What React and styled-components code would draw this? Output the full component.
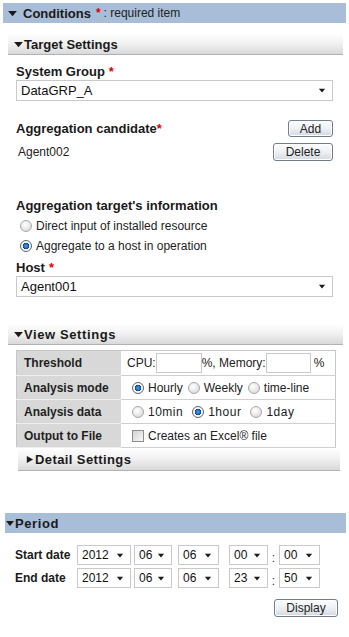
import React from "react";
import styled, { createGlobalStyle } from "styled-components";

const GlobalStyle = createGlobalStyle`
  body {
    margin: 0;
    background: #fff;
    font-family: "Liberation Sans", Arial, sans-serif;
    font-size: 12px;
    color: #222;
  }
`;

const Page = styled.div`
  width: 349px;
  padding-top: 3px;
  padding-bottom: 20px;
`;

const BlueBar = styled.div`
  display: flex;
  align-items: center;
  height: 20px;
  margin: ${(p) => p.$margin || "0 3px"};
  padding-left: ${(p) => p.$pad || 5}px;
  background: #a8bdd7;
  color: #1a1a1a;
`;

const BarTitle = styled.span`
  font-size: 13px;
  font-weight: bold;
  letter-spacing: ${(p) => p.$spacing || 0}px;
  margin-left: ${(p) => p.$gap || 0}px;
`;

const Req = styled.span`
  color: #e00000;
  font-weight: bold;
  margin-left: ${(p) => p.$gap ?? 4}px;
`;

const Note = styled.span`
  font-size: 12px;
  font-weight: normal;
  color: #222;
  margin-left: 3px;
`;

const Panel = styled.section`
  margin: ${(p) => p.$top}px 6px 0 8px;
`;

const SubHeader = styled.div`
  display: flex;
  align-items: center;
  height: ${(p) => p.$h || 19}px;
  padding-left: ${(p) => p.$pad || 6}px;
  background: linear-gradient(#fdfdfd 0%, #f1f1f1 45%, #d9d9d9 100%);
  border-bottom: 1px solid #aeb3b8;
  font-size: 13px;
  font-weight: bold;
  color: #1a1a1a;
  letter-spacing: ${(p) => p.$spacing || 0}px;
`;

const Body = styled.div`
  padding: 0 10px 0 8px;
`;

const FieldLabel = styled.div`
  margin-top: ${(p) => p.$top || 0}px;
  height: 16px;
  line-height: 16px;
  font-size: 13px;
  font-weight: bold;
  color: #1a1a1a;
`;

const SelectBox = styled.div`
  display: flex;
  align-items: center;
  justify-content: space-between;
  box-sizing: border-box;
  width: ${(p) => (p.$w ? `${p.$w}px` : "100%")};
  height: ${(p) => p.$h || 21}px;
  margin-right: ${(p) => p.$mr || 0}px;
  padding: 0 6px 0 ${(p) => p.$pl || 4}px;
  border: 1px solid #c9c9c9;
  background: #fff;
  font-size: ${(p) => p.$fs || 13}px;
  color: #111;
`;

const CandidateRow = styled.div`
  display: flex;
  align-items: center;
  justify-content: space-between;
  margin-top: ${(p) => p.$top}px;
  height: ${(p) => p.$h || 18}px;
`;

const Button = styled.button`
  box-sizing: border-box;
  height: ${(p) => p.$h || 18}px;
  width: ${(p) => p.$w}px;
  padding: 0;
  border: 1px solid #6f7d8c;
  border-radius: 3px;
  background: linear-gradient(#fbfcfd 0%, #eef1f4 50%, #d3d9e1 100%);
  font-family: "Liberation Sans", Arial, sans-serif;
  font-size: 12px;
  color: #222;
  box-shadow: inset 0 0 0 1px #fff;
`;

const ItemText = styled.span`
  font-size: 12px;
  color: #222;
  padding-left: 2px;
`;

const RadioList = styled.div`
  margin-top: 2px;
  padding-left: 4px;
`;

const RadioLine = styled.div`
  display: flex;
  align-items: center;
  height: 20px;
`;

const Radio = styled.span`
  display: inline-block;
  box-sizing: border-box;
  width: 12px;
  height: 12px;
  border-radius: 50%;
  flex: none;
  border: 1px solid ${(p) => (p.$on ? "#5c6570" : "#a9a9a9")};
  background: ${(p) =>
    p.$on
      ? "radial-gradient(circle, #4a9de8 0, #1f6cc4 2.2px, #123d6e 3px, #ffffff 3.6px, #eaeaea 100%)"
      : "radial-gradient(circle at 40% 35%, #ffffff 0, #ececec 45%, #cfcfcf 100%)"};
`;

const OptionText = styled.span`
  margin-left: ${(p) => p.$gap ?? 4}px;
  margin-right: ${(p) => p.$mr || 0}px;
  font-size: 12px;
  color: #222;
  letter-spacing: ${(p) => p.$spacing || 0}px;
`;

const Table = styled.table`
  margin: 5px 0 0 8px;
  width: 320px;
  border-collapse: collapse;
  border: 1px solid #c6c6c6;
`;

const Th = styled.th`
  width: 97px;
  height: ${(p) => p.$h || 23}px;
  padding: 0 0 0 7px;
  text-align: left;
  background: #d8d8d8;
  border-bottom: 1px solid #eeeeee;
  font-size: 12px;
  font-weight: bold;
  color: #1f1f1f;
`;

const Td = styled.td`
  padding: 0 0 0 ${(p) => p.$pl || 6}px;
  border-bottom: 1px solid #cfcfcf;
  background: #fff;
`;

const Cell = styled.div`
  display: flex;
  align-items: center;
  font-size: 12px;
  color: #222;
`;

const TextInput = styled.span`
  display: inline-block;
  box-sizing: border-box;
  width: ${(p) => p.$w || 46}px;
  height: 20px;
  border: 1px solid #c9c9c9;
  background: #fff;
`;

const Percent = styled.span`
  margin-left: 3px;
`;

const Check = styled.span`
  display: inline-block;
  box-sizing: border-box;
  width: 12px;
  height: 12px;
  border: 1px solid #8d8d8d;
  background: linear-gradient(135deg, #d2d2d2, #f8f8f8);
`;

const DetailHeader = styled(SubHeader)`
  margin: 1px 0 0 10px;
  width: 315px;
  height: 21px;
  padding-left: 7px;
  letter-spacing: 0.4px;
`;

const PeriodGrid = styled.div`
  display: grid;
  grid-template-columns: 62px auto;
  row-gap: 3px;
  margin-top: 12px;
  padding-left: 15px;
`;

const DateLabel = styled.div`
  display: flex;
  align-items: center;
  font-size: 12px;
  font-weight: bold;
  color: #1a1a1a;
`;

const DateRow = styled.div`
  display: flex;
  align-items: center;
`;

const Colon = styled.span`
  width: 11px;
  text-align: center;
  font-size: 12px;
  padding-top: 6px;
  color: #333;
`;

const Footer = styled.div`
  display: flex;
  justify-content: flex-end;
  margin: 11px 11px 0 0;
`;

const Caret = ({ dir = "down", w = 9, h = 7, mr = 0 }) => (
  <svg
    width={w}
    height={h}
    viewBox="0 0 10 8"
    style={{ marginRight: mr, flex: "none" }}
  >
    {dir === "down" ? (
      <polygon points="0,1 10,1 5,7" fill="#1a1a1a" />
    ) : (
      <polygon points="2,0 9,4 2,8" fill="#1a1a1a" />
    )}
  </svg>
);

const Select = ({ value, ...rest }) => (
  <SelectBox {...rest}>
    <span>{value}</span>
    <Caret w={8} h={5} />
  </SelectBox>
);

const DateSelects = ({ values }) => (
  <DateRow>
    <Select value={values[0]} $w={54} $h={20} $mr={3} $fs={12} />
    <Select value={values[1]} $w={38} $h={20} $mr={6} $fs={12} />
    <Select value={values[2]} $w={41} $h={20} $mr={10} $fs={12} />
    <Select value={values[3]} $w={39} $h={20} $fs={12} />
    <Colon>:</Colon>
    <Select value={values[4]} $w={41} $h={20} $fs={12} />
  </DateRow>
);

export default function App() {
  return (
    <Page>
      <GlobalStyle />
      <BlueBar>
        <Caret w={9} h={7} mr={6} />
        <BarTitle>Conditions</BarTitle>
        <Req $gap={5}>*</Req>
        <Note>: required item</Note>
      </BlueBar>

      <Panel $top={12}>
        <SubHeader>
          <Caret w={9} h={7} mr={1} />
          Target Settings
        </SubHeader>
        <Body>
          <FieldLabel $top={9}>
            System Group<Req $gap={4}>*</Req>
          </FieldLabel>
          <Select value="DataGRP_A" />

          <CandidateRow $top={19} $h={17}>
            <FieldLabel>
              Aggregation candidate<Req $gap={0}>*</Req>
            </FieldLabel>
            <Button $w={45} $h={17}>
              Add
            </Button>
          </CandidateRow>
          <CandidateRow $top={6}>
            <ItemText>Agent002</ItemText>
            <Button $w={60}>Delete</Button>
          </CandidateRow>

          <FieldLabel $top={37}>Aggregation target's information</FieldLabel>
          <RadioList>
            <RadioLine>
              <Radio />
              <OptionText>Direct input of installed resource</OptionText>
            </RadioLine>
            <RadioLine>
              <Radio $on />
              <OptionText>Aggregate to a host in operation</OptionText>
            </RadioLine>
          </RadioList>

          <FieldLabel $top={4}>
            Host<Req $gap={4}>*</Req>
          </FieldLabel>
          <Select value="Agent001" />
        </Body>
      </Panel>

      <Panel $top={28}>
        <SubHeader $spacing={0.6}>
          <Caret w={9} h={7} mr={1} />
          View Settings
        </SubHeader>
        <Table>
          <tbody>
            <tr>
              <Th $h={24}>Threshold</Th>
              <Td>
                <Cell>
                  CPU:
                  <TextInput $w={46} />
                  %, Memory:
                  <TextInput $w={45} />
                  <Percent>%</Percent>
                </Cell>
              </Td>
            </tr>
            <tr>
              <Th>Analysis mode</Th>
              <Td $pl={11}>
                <Cell>
                  <Radio $on />
                  <OptionText $mr={5}>Hourly</OptionText>
                  <Radio />
                  <OptionText $mr={5}>Weekly</OptionText>
                  <Radio />
                  <OptionText>time-line</OptionText>
                </Cell>
              </Td>
            </tr>
            <tr>
              <Th>Analysis data</Th>
              <Td $pl={11}>
                <Cell>
                  <Radio />
                  <OptionText $mr={9} $spacing={0.5}>
                    10min
                  </OptionText>
                  <Radio $on />
                  <OptionText $mr={9} $spacing={0.5}>
                    1hour
                  </OptionText>
                  <Radio />
                  <OptionText $spacing={0.5}>1day</OptionText>
                </Cell>
              </Td>
            </tr>
            <tr>
              <Th>Output to File</Th>
              <Td $pl={11}>
                <Cell>
                  <Check />
                  <OptionText>Creates an Excel® file</OptionText>
                </Cell>
              </Td>
            </tr>
          </tbody>
        </Table>
        <DetailHeader>
          <Caret dir="right" w={9} h={9} mr={1} />
          Detail Settings
        </DetailHeader>
      </Panel>

      <BlueBar $margin="42px 3px 0 5px" $pad={1}>
        <Caret w={8} h={7} mr={1} />
        <BarTitle $spacing={0.6}>Period</BarTitle>
      </BlueBar>

      <PeriodGrid>
        <DateLabel>Start date</DateLabel>
        <DateSelects values={["2012", "06", "06", "00", "00"]} />
        <DateLabel>End date</DateLabel>
        <DateSelects values={["2012", "06", "06", "23", "50"]} />
      </PeriodGrid>
      <Footer>
        <Button $w={64}>Display</Button>
      </Footer>
    </Page>
  );
}
